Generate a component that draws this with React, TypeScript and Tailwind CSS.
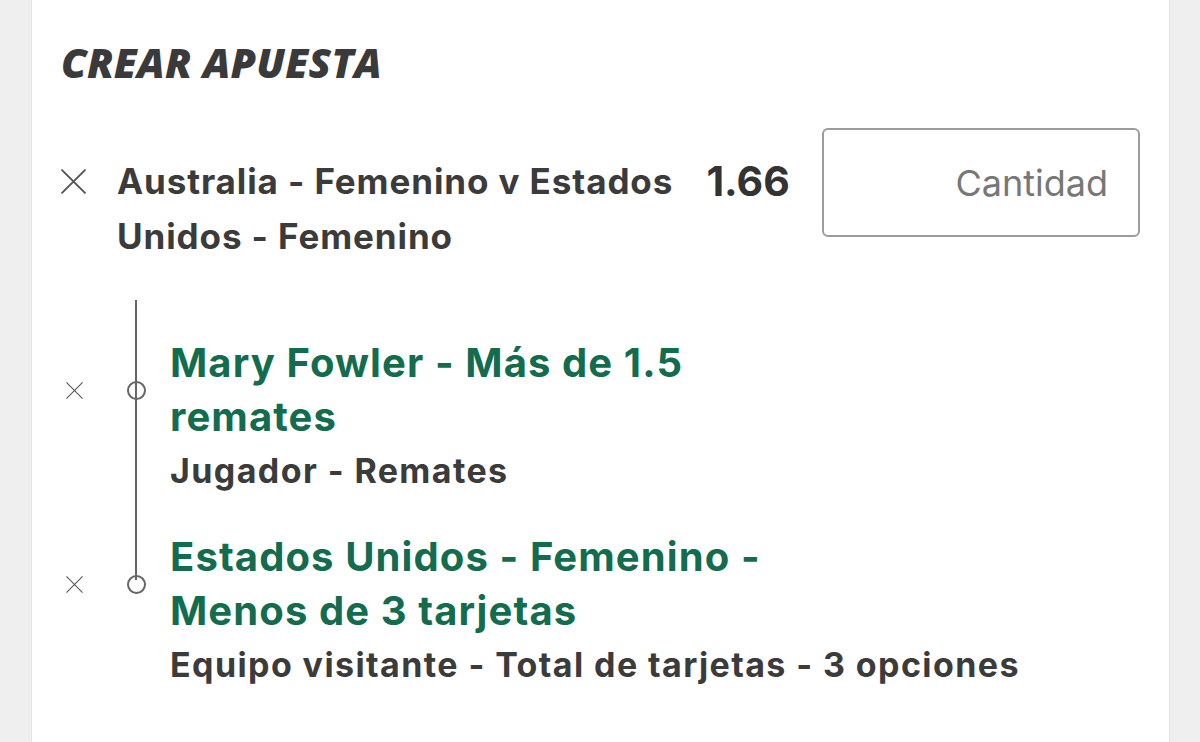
const sans = { fontFamily: 'Inter, "Noto Sans", sans-serif' }

function Cross({ size, stroke }: { size: number; stroke: number }) {
  return (
    <svg width={size} height={size} viewBox="0 0 24 24" fill="none" stroke="#555" strokeWidth={stroke} strokeLinecap="round">
      <path d="M1 1L23 23M23 1L1 23" />
    </svg>
  )
}

interface LegProps {
  title: string[]
  market: string
}

function Leg({ title, market }: LegProps) {
  return (
    <div>
      <div className="flex items-center">
        <div className="flex w-[26px] justify-center">
          <Cross size={17} stroke={1.5} />
        </div>
        <div className="ml-[39px] flex w-[20px] justify-center">
          <span className="h-[19px] w-[19px] rounded-full border-2 border-[#666] bg-white" />
        </div>
        <div className="ml-[24px] text-[40px] font-bold leading-[54px] tracking-[1.1px] text-[#136c4e]">
          {title.map((t) => (
            <div key={t}>{t}</div>
          ))}
        </div>
      </div>
      <div className="pl-[109px] text-[34px] font-bold leading-[54px] tracking-[1.4px] text-[#3b3b3b]">
        {market}
      </div>
    </div>
  )
}

export default function App() {
  return (
    <div className="min-h-[742px] bg-[#efefef] pl-[31px] pr-[30px]" style={sans}>
      <div className="h-[742px] border-x border-[#e4e4e4] bg-white pl-[29px] pr-[29px]">
        {/* Header */}
        <h1
          className="pt-[39px] text-[41px] font-extrabold italic leading-[46px] tracking-[0.2px] text-[#3a3a3a]"
          style={{ fontFamily: '"Open Sans", sans-serif' }}
        >
          CREAR APUESTA
        </h1>

        {/* Selection */}
        <div className="mt-[43px] flex items-start">
          <div className="mt-[26px] flex h-[55px] w-[26px] items-center justify-center">
            <Cross size={25} stroke={1.8} />
          </div>
          <div className="ml-[30px] mt-[26px] w-[560px] text-[35px] font-bold leading-[55px] tracking-[0.9px] text-[#3b3b3b]">
            Australia - Femenino v Estados Unidos - Femenino
          </div>
          <div className="ml-[30px] mt-[26px] w-[84px] text-[41px] font-bold leading-[55px] text-[#333]">
            1.66
          </div>
          <div className="ml-[32px] flex h-[109px] w-[318px] items-center justify-end rounded-[6px] border-2 border-[#9c9c9c] pr-[30px] text-[36px] text-[#777]">
            Cantidad
          </div>
        </div>

        {/* Legs */}
        <div className="relative mt-[36px]">
          <div className="absolute left-[74px] top-0 h-[280px] w-[2px] bg-[#666]" />
          <div className="pt-[36px] pb-[32px]">
            <Leg title={['Mary Fowler - Más de 1.5', 'remates']} market="Jugador - Remates" />
          </div>
          <Leg
            title={['Estados Unidos - Femenino -', 'Menos de 3 tarjetas']}
            market="Equipo visitante - Total de tarjetas - 3 opciones"
          />
        </div>
      </div>
    </div>
  )
}
